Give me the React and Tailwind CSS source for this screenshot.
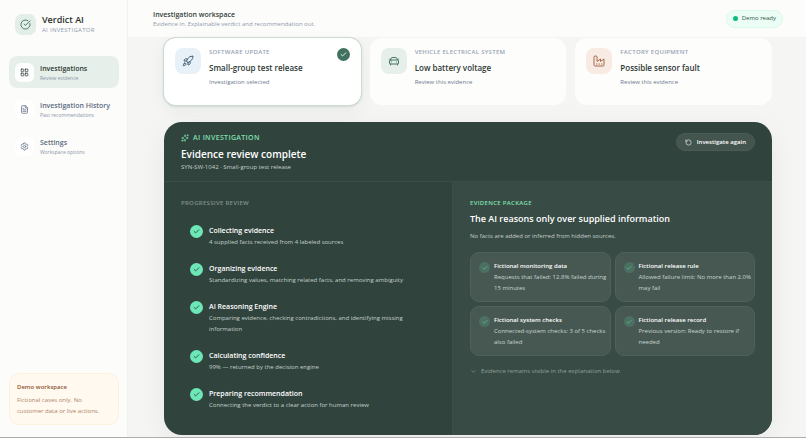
import {
  CircleCheckBig, LayoutGrid, FileText, Settings, Rocket, CarFront,
  Check, Sparkles, RotateCcw, ChevronDown,
} from "lucide-react";

function FactoryIcon({ size }) {
  return (
    <svg width={size} height={size} viewBox="0 0 24 24" fill="none" stroke="currentColor" strokeWidth="2" strokeLinecap="round" strokeLinejoin="round" aria-hidden="true">
      <path d="M2 20a2 2 0 0 0 2 2h16a2 2 0 0 0 2-2V8l-7 5V8l-7 5V4a2 2 0 0 0-2-2H4a2 2 0 0 0-2 2Z" />
      <path d="M17 18h1M12 18h1M7 18h1" />
    </svg>
  );
}

const NAV = [
  { title: "Investigations", sub: "Review evidence", Icon: LayoutGrid, active: true },
  { title: "Investigation History", sub: "Past recommendations", Icon: FileText },
  { title: "Settings", sub: "Workspace options", Icon: Settings },
];

const CASES = [
  { kind: "SOFTWARE UPDATE", title: "Small-group test release", sub: "Investigation selected", Icon: Rocket, tone: "bg-[#e8f0f8] text-[#3f6078]", selected: true },
  { kind: "VEHICLE ELECTRICAL SYSTEM", title: "Low battery voltage", sub: "Review this evidence", Icon: CarFront, tone: "bg-[#e6efe9] text-[#41725f]" },
  { kind: "FACTORY EQUIPMENT", title: "Possible sensor fault", sub: "Review this evidence", Icon: FactoryIcon, tone: "bg-[#f8ebe3] text-[#a8674a]" },
];

const STEPS = [
  ["Collecting evidence", "4 supplied facts received from 4 labeled sources"],
  ["Organizing evidence", "Standardizing values, matching related facts, and removing ambiguity"],
  ["AI Reasoning Engine", "Comparing evidence, checking contradictions, and identifying missing information"],
  ["Calculating confidence", "99% — returned by the decision engine"],
  ["Preparing recommendation", "Connecting the verdict to a clear action for human review"],
];

const FACTS = [
  ["Fictional monitoring data", "Requests that failed: 12.8% failed during 15 minutes"],
  ["Fictional release rule", "Allowed failure limit: No more than 2.0% may fail"],
  ["Fictional system checks", "Connected-system checks: 3 of 5 checks also failed"],
  ["Fictional release record", "Previous version: Ready to restore if needed"],
];

function Sidebar() {
  return (
    <aside className="flex w-[128px] shrink-0 flex-col border-r border-[#f1f2f0] bg-[#fcfcfa] pt-[13px] pr-2 pb-3 pl-[9px]">
      <div className="flex items-center gap-[6px] pl-[6px]">
        <span className="flex size-[21px] items-center justify-center rounded-[7px] bg-[#e4eee8] text-[#41725f]">
          <CircleCheckBig size={11} />
        </span>
        <div>
          <p className="text-[9px] leading-[13px] font-semibold text-[#27302d]">Verdict AI</p>
          <p className="text-[6px] leading-[9px] font-medium tracking-wider text-[#909bb0]">AI INVESTIGATOR</p>
        </div>
      </div>
      <nav className="mt-[21px] flex flex-col gap-[5px]">
        {NAV.map(({ title, sub, Icon, active }) => (
          <a
            key={title}
            href="#"
            className={`flex h-8 items-center gap-[6px] rounded-[8px] pl-[6px] ${active ? "bg-[#e6efe9] text-[#2d3a35]" : "text-[#5d6b80]"}`}
          >
            <span className="flex size-[19px] shrink-0 items-center justify-center rounded-[6px] bg-white">
              <Icon size={9} />
            </span>
            <span className="pt-[2px] whitespace-nowrap">
              <span className="block text-[7px] leading-[10px] font-semibold">{title}</span>
              <span className="block text-[5px] leading-[9px] text-[#8b96aa]">{sub}</span>
            </span>
          </a>
        ))}
      </nav>
      <section className="mt-auto rounded-[10px] border border-[#fdf1de] bg-[#fff9ef] px-[7px] pt-2 pb-[7px]">
        <h2 className="text-[6px] leading-[10px] font-semibold text-[#8f5330]">Demo workspace</h2>
        <p className="mt-[3px] text-[6px] leading-[11px] whitespace-nowrap text-[#b08468]">
          Fictional cases only. No<br />customer data or live actions.
        </p>
      </section>
    </aside>
  );
}

function CaseCard({ kind, title, sub, Icon, tone, selected }) {
  return (
    <button
      type="button"
      className={`flex h-[67px] items-start gap-2 rounded-[12px] px-[11px] pt-[10px] text-left ${selected ? "bg-white shadow-[0_1px_3px_rgba(60,100,80,0.3),0_6px_18px_rgba(50,80,65,0.06)] ring-1 ring-[#cbdad3]" : "bg-[#fdfdfb]"}`}
    >
      <span className={`flex size-[26px] shrink-0 items-center justify-center rounded-[8px] ${tone}`}>
        <Icon size={12} />
      </span>
      <span className="min-w-0 flex-1">
        <span className="block text-[6px] leading-[8px] font-semibold tracking-wider whitespace-nowrap text-[#98a2b5]">{kind}</span>
        <span className="mt-[5px] block text-[8px] leading-[14px] font-semibold whitespace-nowrap text-[#2d3834]">{title}</span>
        <span className="mt-[2px] block text-[6px] leading-[10px] text-[#6c7990]">{sub}</span>
      </span>
      {selected && (
        <span className="-ml-5 flex size-[13px] shrink-0 items-center justify-center rounded-full bg-[#41725f] text-white">
          <Check size={7} strokeWidth={3} />
        </span>
      )}
    </button>
  );
}

function Investigation() {
  return (
    <section className="mt-[17px] flex min-h-[313px] flex-col overflow-hidden rounded-[18px] bg-[#31433d] text-white shadow-[0_8px_28px_rgba(40,60,50,0.06)]">
      <header className="flex h-[60px] shrink-0 items-start justify-between border-b border-[#3d4e48] px-[17px] pt-[11px]">
        <div>
          <p className="flex items-center gap-1 text-[7px] leading-[10px] font-semibold tracking-wider text-[#7fe0b0]">
            <Sparkles size={8} />AI INVESTIGATION
          </p>
          <h2 className="mt-[3px] text-[10px] leading-[16px] font-semibold">Evidence review complete</h2>
          <p className="text-[6px] leading-[11px] text-[#c3cfcc]">SYN-SW-1042 · Small-group test release</p>
        </div>
        <button type="button" className="flex h-[18px] items-center gap-[5px] rounded-full border border-[#4b5c56] bg-[#44554f] px-2 text-[6px] font-semibold">
          <RotateCcw size={7} />Investigate again
        </button>
      </header>
      <div className="grid flex-1 grid-cols-[9fr_10fr]">
        <div className="px-[17px] pt-4">
          <h3 className="text-[6px] leading-[10px] font-semibold tracking-wider text-[#82918d]">PROGRESSIVE REVIEW</h3>
          <ol className="mt-4 flex flex-col gap-[14px] pr-6 pl-[9px]">
            {STEPS.map(([title, text]) => (
              <li key={title} className="flex items-start gap-[6px]">
                <span className="mt-[1px] flex size-[13px] shrink-0 items-center justify-center rounded-full bg-[#6ee7b7] text-[#31433d]">
                  <Check size={7} strokeWidth={3} />
                </span>
                <div>
                  <h4 className="text-[7px] leading-[13px] font-semibold">{title}</h4>
                  <p className="text-[6px] leading-[11px] text-[#c3cfcc]">{text}</p>
                </div>
              </li>
            ))}
          </ol>
        </div>
        <div className="border-l border-[#3b4d47] bg-[#394b45] px-[17px] pt-4">
          <h3 className="text-[6px] leading-[10px] font-semibold tracking-wider text-[#7fe0b0]">EVIDENCE PACKAGE</h3>
          <p className="mt-1 text-[9px] leading-[14px] font-semibold">The AI reasons only over supplied information</p>
          <p className="mt-1 text-[6px] leading-[12px] text-[#c3cfcc]">No facts are added or inferred from hidden sources.</p>
          <ul className="mt-[10px] grid grid-cols-2 gap-1">
            {FACTS.map(([title, text]) => (
              <li key={title} className="flex h-[50px] items-start gap-1 rounded-[9px] border border-[#50615b] bg-[#475852] pt-2 pr-[2px] pl-2">
                <span className="mt-[1px] flex size-[11px] shrink-0 items-center justify-center rounded-full bg-[#4b7061] text-[#7fe0b0]">
                  <Check size={6} />
                </span>
                <div>
                  <h4 className="text-[6px] leading-[10px] font-semibold">{title}</h4>
                  <p className="mt-[1px] text-[6px] leading-[11px] text-[#c8d3d0]">{text}</p>
                </div>
              </li>
            ))}
          </ul>
          <p className="mt-[10px] flex items-center gap-1 text-[6px] leading-[10px] text-[#8ea19b]">
            <ChevronDown size={7} />Evidence remains visible in the explanation below
          </p>
        </div>
      </div>
    </section>
  );
}

export default function App() {
  return (
    <div className="flex h-screen overflow-hidden border-b border-[#adadad] bg-[#f5f5f3] font-['Open_Sans',sans-serif]">
      <Sidebar />
      <div className="flex min-w-0 flex-1 flex-col">
        <header className="flex h-[38px] shrink-0 items-center justify-between border-b border-[#f4f4f2] bg-[#fcfcfa] pr-[23px] pl-[25px]">
          <div className="pt-[2px]">
            <h1 className="text-[7px] leading-[10px] font-semibold text-[#34403c]">Investigation workspace</h1>
            <p className="text-[6px] leading-[9px] text-[#909bb0]">Evidence in. Explainable verdict and recommendation out.</p>
          </div>
          <p className="flex h-[18px] items-center gap-1 rounded-full border border-[#dcf9ea] bg-[#ebfdf4] px-[6px] text-[6px] font-medium text-[#33594a]">
            <span className="size-[5px] rounded-full bg-[#10b981]" />Demo ready
          </p>
        </header>
        <main className="min-h-0 flex-1 pr-[34px] pl-[36px]">
          <div className="grid grid-cols-3 gap-[9px]">
            {CASES.map((item) => <CaseCard key={item.title} {...item} />)}
          </div>
          <Investigation />
        </main>
      </div>
    </div>
  );
}
